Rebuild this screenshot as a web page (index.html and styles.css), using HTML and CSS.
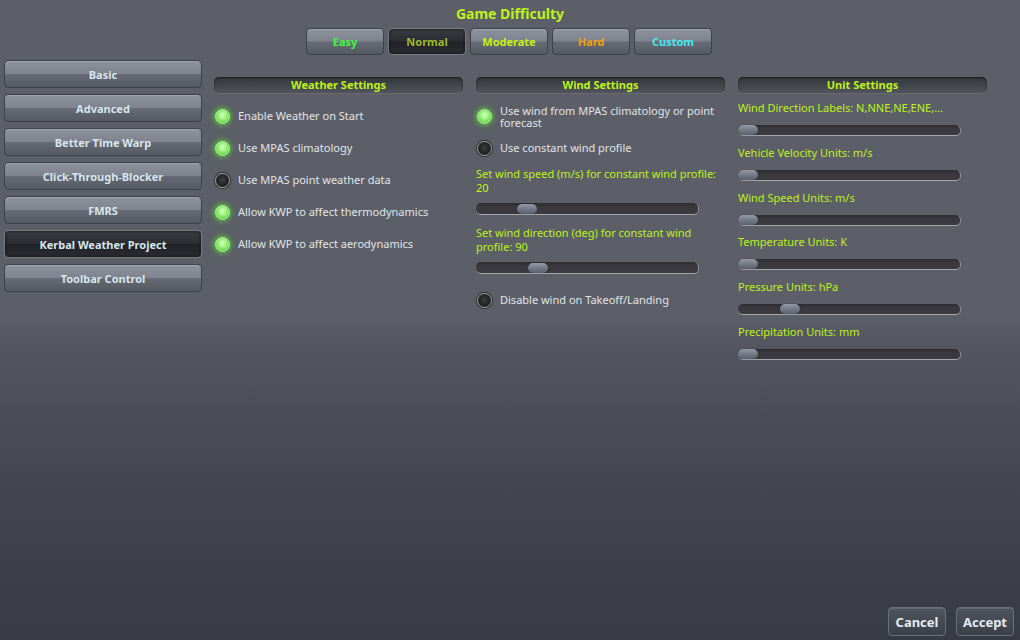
FILE: index.html
```html
<!DOCTYPE html>
<html>
<head>
<meta charset="utf-8">
<link rel="stylesheet" href="styles.css">
</head>
<body>
<div class="screen">
  <div class="top">
    <div class="title">Game Difficulty</div>
    <div class="diff-row">
      <div class="btn diff easy">Easy</div>
      <div class="btn diff normal selected">Normal</div>
      <div class="btn diff moderate">Moderate</div>
      <div class="btn diff hard">Hard</div>
      <div class="btn diff custom">Custom</div>
    </div>
  </div>
  <div class="main">
    <div class="sidebar">
      <div class="btn side">Basic</div>
      <div class="btn side">Advanced</div>
      <div class="btn side">Better Time Warp</div>
      <div class="btn side">Click-Through-Blocker</div>
      <div class="btn side">FMRS</div>
      <div class="btn side selected">Kerbal Weather Project</div>
      <div class="btn side">Toolbar Control</div>
    </div>
    <div class="col">
      <div class="sec-head">Weather Settings</div>
      <div class="toggles">
        <div class="toggle"><span class="led on"></span><span class="tlabel">Enable Weather on Start</span></div>
        <div class="toggle"><span class="led on"></span><span class="tlabel">Use MPAS climatology</span></div>
        <div class="toggle"><span class="led"></span><span class="tlabel">Use MPAS point weather data</span></div>
        <div class="toggle"><span class="led on"></span><span class="tlabel">Allow KWP to affect thermodynamics</span></div>
        <div class="toggle"><span class="led on"></span><span class="tlabel">Allow KWP to affect aerodynamics</span></div>
      </div>
    </div>
    <div class="col">
      <div class="sec-head">Wind Settings</div>
      <div class="toggles">
        <div class="toggle two"><span class="led on"></span><span class="tlabel">Use wind from MPAS climatology or point forecast</span></div>
        <div class="toggle"><span class="led"></span><span class="tlabel">Use constant wind profile</span></div>
      </div>
      <div class="wlabel first">Set wind speed (m/s) for constant wind profile: 20</div>
      <div class="slider wide"><span class="thumb" style="margin-left:41px"></span></div>
      <div class="wlabel">Set wind direction (deg) for constant wind profile: 90</div>
      <div class="slider wide"><span class="thumb" style="margin-left:52px"></span></div>
      <div class="toggle last"><span class="led"></span><span class="tlabel">Disable wind on Takeoff/Landing</span></div>
    </div>
    <div class="col units">
      <div class="sec-head">Unit Settings</div>
      <div class="unit"><div class="ulabel">Wind Direction Labels: N,NNE,NE,ENE,...</div><div class="slider"><span class="thumb"></span></div></div>
      <div class="unit"><div class="ulabel">Vehicle Velocity Units: m/s</div><div class="slider"><span class="thumb"></span></div></div>
      <div class="unit"><div class="ulabel">Wind Speed Units: m/s</div><div class="slider"><span class="thumb"></span></div></div>
      <div class="unit"><div class="ulabel">Temperature Units: K</div><div class="slider"><span class="thumb"></span></div></div>
      <div class="unit"><div class="ulabel">Pressure Units: hPa</div><div class="slider"><span class="thumb" style="margin-left:42px"></span></div></div>
      <div class="unit"><div class="ulabel">Precipitation Units: mm</div><div class="slider"><span class="thumb"></span></div></div>
    </div>
  </div>
  <div class="footer">
    <div class="btn foot">Cancel</div>
    <div class="btn foot">Accept</div>
  </div>
</div>
</body>
</html>
```
FILE: styles.css
```css
html, body {
  margin: 0;
  padding: 0;
}
body {
  width: 1020px;
  height: 640px;
  overflow: hidden;
  font-family: "Noto Sans", "Open Sans", sans-serif;
  background: linear-gradient(to bottom, #5c5f67 0px, #5c5f67 318px, #555862 335px, #4a4d56 420px, #40434c 520px, #383b44 640px);
}
.screen {
  height: 640px;
  display: flex;
  flex-direction: column;
}
.top {
  display: flex;
  flex-direction: column;
  align-items: center;
  padding-top: 5px;
}
.title {
  font-size: 14px;
  font-weight: bold;
  line-height: 18px;
  color: #bdf21a;
}
.diff-row {
  display: flex;
  gap: 4px;
  margin-top: 5px;
  margin-right: 2px;
}
.btn {
  box-sizing: border-box;
  display: flex;
  align-items: center;
  justify-content: center;
  font-weight: bold;
  font-size: 11px;
  border-radius: 4px;
  border: 1px solid #3e4149;
  background: linear-gradient(to bottom, #8e929c 0%, #7f838d 48%, #676b75 52%, #555962 100%);
  box-shadow: inset 0 1px 0 rgba(255,255,255,0.18);
}
.btn.selected {
  background: linear-gradient(to bottom, #383b41 0%, #2b2d32 48%, #202227 52%, #2a2c31 100%);
  border: 1px solid #777b83;
  box-shadow: inset 0 0 3px rgba(0,0,0,0.8);
}
.diff {
  width: 78px;
  height: 27px;
}
.easy { color: #40fa40; }
.normal { color: #9cbc2c; }
.moderate { color: #c6f012; }
.hard { color: #f0a010; }
.custom { color: #46eaf2; }
.main {
  display: flex;
  padding-left: 4px;
  margin-top: 5px;
}
.sidebar {
  width: 198px;
  display: flex;
  flex-direction: column;
  gap: 6px;
}
.side {
  height: 28px;
  color: #d8e6ee;
}
.col {
  width: 249px;
  margin-left: 13px;
  padding-top: 17px;
  display: flex;
  flex-direction: column;
}
.col:nth-child(2) {
  margin-left: 12px;
}
.sec-head {
  height: 16px;
  border-radius: 5px;
  background: linear-gradient(to bottom, #33363c 0%, #44474e 60%, #53565d 100%);
  box-shadow: inset 0 1px 2px rgba(0,0,0,0.5), 0 1px 0 rgba(255,255,255,0.08);
  color: #bdf21a;
  font-weight: bold;
  font-size: 11px;
  line-height: 16px;
  text-align: center;
}
.toggles {
  margin-top: 7px;
  display: flex;
  flex-direction: column;
}
.toggle {
  height: 32px;
  display: flex;
  align-items: center;
  padding-left: 1px;
}
.toggle.two .tlabel {
  padding-top: 2px;
}
.led {
  flex: none;
  width: 15px;
  height: 15px;
  border-radius: 50%;
  box-sizing: border-box;
  border: 1px solid #9a9da4;
  background: radial-gradient(circle at 50% 45%, #3e3f42 0%, #222326 55%, #141517 100%);
  box-shadow: 0 0 1px 1px rgba(0,0,0,0.5);
}
.led.on {
  border: 1px solid #b8f5a0;
  background: radial-gradient(circle at 50% 40%, #d6ffc4 0%, #9af27a 40%, #5fd43e 80%, #3fae28 100%);
  box-shadow: 0 0 4px 2px rgba(90, 220, 50, 0.6);
}
.tlabel {
  margin-left: 8px;
  font-size: 11px;
  line-height: 12px;
  color: #e0e4e8;
}
.wlabel {
  margin-top: 11px;
  font-size: 11px;
  line-height: 13.5px;
  color: #bdf21a;
}
.wlabel.first {
  margin-top: 3px;
}
.slider {
  box-sizing: border-box;
  width: 223px;
  height: 11px;
  margin-top: 9px;
  border-radius: 5px;
  background: linear-gradient(to bottom, #2e2d32 0%, #3a393f 40%, #3b3a40 100%);
  border-bottom: 1px solid #a4a7ad;
  border-right: 1px solid #8d9096;
  display: flex;
  align-items: center;
}
.slider.wide {
  height: 12px;
}
.thumb {
  flex: none;
  width: 20px;
  height: 10px;
  border-radius: 5px;
  background: linear-gradient(to bottom, #959aa6 0%, #767c89 45%, #5a606c 100%);
  box-shadow: 0 0 1px rgba(0,0,0,0.7);
}
.toggle.last {
  margin-top: 10px;
}
.units .sec-head {
  margin-bottom: 1px;
}
.unit {
  display: flex;
  flex-direction: column;
  margin-top: 7px;
  height: 37.8px;
}
.ulabel {
  font-size: 11px;
  line-height: 14px;
  color: #bdf21a;
}
.unit .slider {
  margin-top: 10px;
}
.footer {
  margin-top: auto;
  display: flex;
  justify-content: flex-end;
  gap: 10px;
  padding: 0 6px 4px 0;
}
.foot {
  width: 58px;
  height: 29px;
  font-size: 13px;
  color: #e4ecf2;
  border: 1px solid #6b6f78;
  background: linear-gradient(to bottom, #4f535c 0%, #464a53 50%, #3b3f48 100%);
  box-shadow: inset 0 1px 0 rgba(255,255,255,0.12);
}
```
